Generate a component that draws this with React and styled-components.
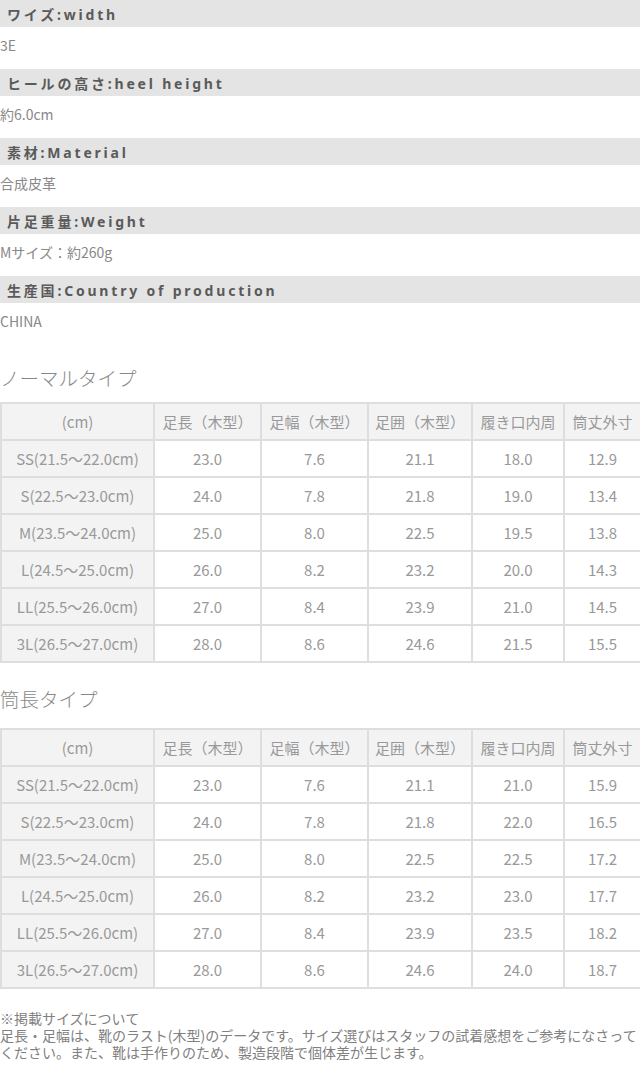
import React from 'react';
import styled, { createGlobalStyle } from 'styled-components';

const GlobalStyle = createGlobalStyle`
  html, body {
    margin: 0;
    padding: 0;
    background: #fff;
  }
  body {
    font-family: "Noto Sans CJK JP", "Noto Sans", sans-serif;
    color: #888;
  }
`;

const Page = styled.div`
  width: 640px;
  overflow: hidden;
`;

const SpecHead = styled.div`
  height: 27px;
  background: #e4e4e4;
  padding-left: 7px;
  display: flex;
  align-items: center;
  font-family: "Noto Sans", "Noto Sans CJK JP", sans-serif;
  font-weight: 700;
  font-size: 14px;
  letter-spacing: 2.8px;
  color: #5a5a5a;
`;

const SpecValue = styled.div`
  height: 42px;
  box-sizing: border-box;
  padding-top: 8px;
  font-size: 14px;
  line-height: 20px;
  color: #888;
`;

const Title = styled.h2`
  margin: ${({ $top }) => $top}px 0 ${({ $bottom }) => $bottom}px;
  font-size: 19.5px;
  line-height: 22px;
  font-weight: 300;
  color: #888;
`;

const Table = styled.table`
  width: 640px;
  border-collapse: collapse;
  table-layout: fixed;
  border: 2px solid #dedede;
`;

const Cell = styled.td`
  height: 37px;
  box-sizing: border-box;
  border: 2px solid #dedede;
  padding: 0;
  text-align: center;
  font-size: 15px;
  color: #999;
  background: ${({ $shade }) => ($shade ? '#f3f3f3' : '#fff')};
`;

const Note = styled.p`
  margin: 21px 0 0;
  font-size: 14px;
  line-height: 17px;
  color: #808080;
`;

const widths = [153, 107, 107, 104, 92, 77];
const headers = ['(cm)', '足長（木型）', '足幅（木型）', '足囲（木型）', '履き口内周', '筒丈外寸'];
const sizes = [
  'SS(21.5～22.0cm)',
  'S(22.5～23.0cm)',
  'M(23.5～24.0cm)',
  'L(24.5～25.0cm)',
  'LL(25.5～26.0cm)',
  '3L(26.5～27.0cm)',
];
const base = [
  ['23.0', '7.6', '21.1'],
  ['24.0', '7.8', '21.8'],
  ['25.0', '8.0', '22.5'],
  ['26.0', '8.2', '23.2'],
  ['27.0', '8.4', '23.9'],
  ['28.0', '8.6', '24.6'],
];
const normal = [
  ['18.0', '12.9'],
  ['19.0', '13.4'],
  ['19.5', '13.8'],
  ['20.0', '14.3'],
  ['21.0', '14.5'],
  ['21.5', '15.5'],
];
const tall = [
  ['21.0', '15.9'],
  ['22.0', '16.5'],
  ['22.5', '17.2'],
  ['23.0', '17.7'],
  ['23.5', '18.2'],
  ['24.0', '18.7'],
];

const specs = [
  ['ワイズ:width', '3E'],
  ['ヒールの高さ:heel height', '約6.0cm'],
  ['素材:Material', '合成皮革'],
  ['片足重量:Weight', 'Mサイズ：約260g'],
  ['生産国:Country of production', 'CHINA'],
];

function SizeTable({ extra }) {
  return (
    <Table>
      <colgroup>
        {widths.map((w, i) => (
          <col key={i} style={{ width: w }} />
        ))}
      </colgroup>
      <tbody>
        <tr>
          {headers.map((h) => (
            <Cell key={h} $shade>{h}</Cell>
          ))}
        </tr>
        {sizes.map((s, i) => (
          <tr key={s}>
            <Cell $shade>{s}</Cell>
            {[...base[i], ...extra[i]].map((v, j) => (
              <Cell key={j}>{v}</Cell>
            ))}
          </tr>
        ))}
      </tbody>
    </Table>
  );
}

export default function App() {
  return (
    <Page>
      <GlobalStyle />
      {specs.map(([head, val]) => (
        <React.Fragment key={head}>
          <SpecHead>{head}</SpecHead>
          <SpecValue>{val}</SpecValue>
        </React.Fragment>
      ))}
      <Title $top={22} $bottom={13}>ノーマルタイプ</Title>
      <SizeTable extra={normal} />
      <Title $top={25} $bottom={18}>筒長タイプ</Title>
      <SizeTable extra={tall} />
      <Note>
        ※掲載サイズについて
        <br />
        足長・足幅は、靴のラスト(木型)のデータです。サイズ選びはスタッフの試着感想をご参考になさってください。また、靴は手作りのため、製造段階で個体差が生じます。
      </Note>
    </Page>
  );
}
